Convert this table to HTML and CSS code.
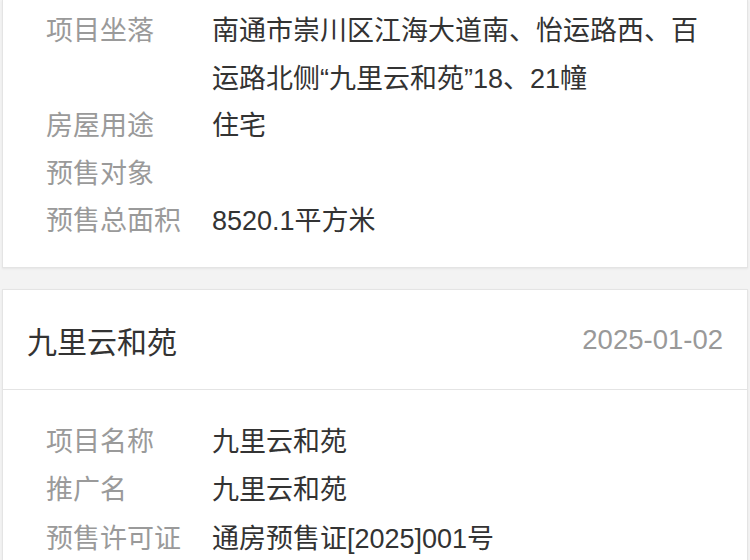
FILE: index.html
```html
<!DOCTYPE html>
<html lang="zh-CN">
<head>
<meta charset="utf-8">
<link rel="stylesheet" href="styles.css">
</head>
<body>
<div class="page">
  <section class="card card-cut">
    <div class="body">
      <div class="row"><span class="label">项目坐落</span><span class="value">南通市崇川区江海大道南、怡运路西、百运路北侧“九里云和苑”18、21幢</span></div>
      <div class="row"><span class="label">房屋用途</span><span class="value">住宅</span></div>
      <div class="row"><span class="label">预售对象</span><span class="value"></span></div>
      <div class="row"><span class="label">预售总面积</span><span class="value">8520.1平方米</span></div>
    </div>
  </section>
  <section class="card">
    <div class="head">
      <span class="title">九里云和苑</span>
      <span class="date">2025-01-02</span>
    </div>
    <div class="body body-top">
      <div class="row"><span class="label">项目名称</span><span class="value">九里云和苑</span></div>
      <div class="row"><span class="label">推广名</span><span class="value">九里云和苑</span></div>
      <div class="row"><span class="label">预售许可证</span><span class="value">通房预售证[2025]001号</span></div>
    </div>
  </section>
</div>
</body>
</html>
```
FILE: styles.css
```css
html, body {
  margin: 0;
  padding: 0;
}
body {
  background: #f3f3f3;
  font-family: "Liberation Sans", "Noto Sans CJK SC", sans-serif;
  width: 750px;
  height: 560px;
  overflow: hidden;
}
.page {
  display: flex;
  flex-direction: column;
  gap: 21px;
}
.card {
  margin: 0 2px;
  background: #fff;
  border: 1px solid #e4e4e4;
  box-shadow: 0 1px 2px rgba(0,0,0,0.06);
}
.card-cut {
  border-top: none;
}
.body {
  padding: 8px 26px 21px 43px;
}
.body-top {
  padding-top: 28px;
}
.body-top .row {
  line-height: 48.5px;
}
.row {
  display: flex;
  font-size: 27px;
  line-height: 47.5px;
}
.label {
  flex: 0 0 166px;
  color: #9a9a9a;
}
.value {
  flex: 1;
  color: #333;
}
.head {
  height: 100px;
  display: flex;
  align-items: center;
  justify-content: space-between;
  padding: 2px 24px 0 24px;
  box-sizing: border-box;
  border-bottom: 1px solid #e4e4e4;
}
.title {
  font-size: 30px;
  color: #333;
}
.date {
  font-size: 27.5px;
  color: #999;
}
```
